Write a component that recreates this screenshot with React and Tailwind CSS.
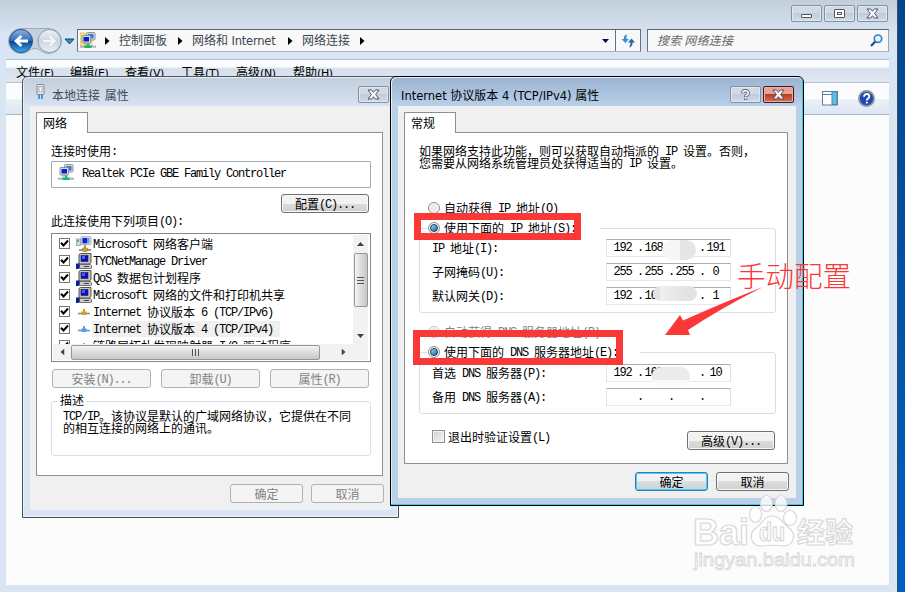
import React from 'react';

const CJK = "font-['Noto_Sans_CJK_SC',sans-serif]";

// Mixed text: half-width runs take six pixels a character, full-width runs twelve.
function T({ children }) {
  return String(children)
    .split(/([\x20-\x7e]+)/)
    .filter(Boolean)
    .map((run, i) =>
      /^[\x20-\x7e]/.test(run) ? (
        <span key={i} className="align-[1px] font-['Liberation_Mono',monospace] text-[12px] leading-[0px] tracking-[-1.2px]">{run}</span>
      ) : (
        <span key={i}>{run}</span>
      )
    );
}

function Line({ children, className = '' }) {
  return <div className={`h-[12px] shrink-0 whitespace-pre text-[12px] leading-[12px] ${CJK} ${className}`}><T>{children}</T></div>;
}

function Button({ children, className = '', disabled, primary }) {
  const tone = disabled
    ? 'border-[#adb2b5] bg-[#f4f4f4] text-[#838383]'
    : primary
      ? 'border-[#2c7fb5] bg-gradient-to-b from-[#f0f2f3] from-50% via-[#dcdfe1] via-50% to-[#cdd2d4] text-black shadow-[inset_0_0_0_1px_#4bcdf5]'
      : 'border-[#707070] bg-gradient-to-b from-[#f2f2f2] from-50% via-[#dddddd] via-50% to-[#cfcfcf] text-black shadow-[inset_0_0_0_1px_#f8f8f8]';
  return (
    <button className={`flex shrink-0 items-center justify-center rounded-[3px] border ${tone} ${className}`}>
      <Line>{children}</Line>
    </button>
  );
}

function CloseGlyph() {
  return (
    <svg width="13" height="11" viewBox="0 0 13 11">
      <path d="M1 1h3.6l1.9 2.3L8.4 1H12L8.6 5.5 12 10H8.4L6.5 7.7 4.6 10H1l3.4-4.5z" fill="#fff" stroke="#4a515c" strokeWidth="1" />
    </svg>
  );
}

function CaptionButton({ children, red }) {
  const tone = red
    ? 'border-[#4a1420] bg-gradient-to-b from-[#e3a495] from-50% via-[#b93c1e] via-50% to-[#d2705a] shadow-[inset_0_0_0_1px_#e8b0a4]'
    : 'border-[#8390a3] bg-gradient-to-b from-[#d0dae7] from-50% via-[#c0ccdb] via-50% to-[#d0dcea] shadow-[inset_0_0_0_1px_#dfe7f1]';
  return <div className={`flex h-[17px] w-[31px] items-center justify-center rounded-[2px] border ${tone}`}>{children}</div>;
}

function ConnectionIcon({ folder }) {
  return (
    <svg width="16" height="17" viewBox="0 0 16 17" className="shrink-0">
      {folder && <path d="M0 1h5l1 1h6v12H0z" fill="#fbe28a" stroke="#d9b54c" strokeWidth=".7" />}
      <rect x="6.5" y=".5" width="8.5" height="7.5" rx="1" fill="#d9dde0" stroke="#8d9499" />
      <rect x="8" y="2" width="5.5" height="4.5" fill="#3e76e0" />
      <rect x="2" y="3.5" width="8.5" height="7.5" rx="1" fill="#d9dde0" stroke="#8d9499" />
      <rect x="3.5" y="5" width="5.5" height="4.5" fill="#0a1fc8" />
      <rect x="4" y="11" width="6" height="1.4" fill="#9aa0a4" />
      <path d="M0 14.7h16" stroke="#a9b3b9" strokeWidth="2" />
      <path d="M7 12h2v1.5h2.5V16h-7v-2.500H7z" fill="#17b86a" />
    </svg>
  );
}

function ClientIcon() {
  return (
    <svg width="16" height="16" viewBox="0 0 16 16">
      <rect x=".5" y="3" width="4" height="6.500" fill="#d6dadc" stroke="#8a9094" strokeWidth=".7" />
      <rect x="1" y="4" width="2" height="2" fill="#4ec04e" />
      <rect x="5" y=".7" width="10" height="8" rx=".8" fill="#dfe3e6" stroke="#9aa1a6" strokeWidth=".8" />
      <path d="M6.500 2h7v5.300h-7z" fill="#6c98ea" /><path d="M6.500 2h4.500v5.300H6.500z" fill="#0a23d4" />
      <path d="M9 9v3M3 14h12" stroke="#777" strokeWidth="1.400" />
      <rect x="6.500" y="12" width="5" height="3.500" rx="1" fill="#e3a322" stroke="#9b6a0c" strokeWidth=".6" />
    </svg>
  );
}

function ServiceIcon() {
  return (
    <svg width="16" height="16" viewBox="0 0 16 16">
      <path d="M3 1.500 4.500.5H15v9l-2 1.500H3z" fill="#c4c4c4" stroke="#444" strokeWidth=".9" />
      <rect x="5" y="2.500" width="7" height="6" fill="#0b0bd8" stroke="#222" strokeWidth=".6" />
      <path d="M6 3h3v3H6z" fill="#3d62ff" />
      <path d="M3.500 11.500h11l1 1v2.500l-1 .5h-11z" fill="#cacaca" stroke="#555" strokeWidth=".8" />
      <path d="M8 13.500h5" stroke="#444" />
      <path d="M0 10.500h3.500v4.500L2 16H0z" fill="#0a1e9c" />
    </svg>
  );
}

function ProtocolIcon({ blue }) {
  return (
    <svg width="16" height="16" viewBox="0 0 16 16">
      <path d="M2 9.500h12" stroke={blue ? '#6d9cc4' : '#8d8d8d'} strokeWidth="1.600" />
      <path d="M7 5h2v2.500h1.500V11h-5V7.500H7z" fill={blue ? '#5aa0d8' : '#d79a26'} />
    </svg>
  );
}

function Check() {
  return (
    <span className="flex h-[11px] w-[11px] shrink-0 items-center justify-center border border-[#777] bg-white">
      <svg width="9" height="9" viewBox="0 0 9 9"><path d="M1 3.800 3.500 6.500 8 1.500" fill="none" stroke="#000" strokeWidth="2" /></svg>
    </span>
  );
}

function Triangle({ className = '' }) {
  return <svg width="7" height="4" viewBox="0 0 7 4" className={className}><path d="M0 0h7L3.500 4z" fill="currentColor" /></svg>;
}

function Crumb() {
  return <svg width="5" height="8" viewBox="0 0 5 8" className="shrink-0"><path d="M0 0v8l4.500-4z" fill="#000" /></svg>;
}

function Explorer() {
  return (
    <div className="flex h-[592px] w-[898px] flex-col border-r border-[#3d4f63] bg-[#d9e5f3]">
      <div className="flex h-[59px] flex-col bg-gradient-to-b from-[#c3cedb] to-[#d9e5f3] to-60%">
        <div className="flex h-[29px] justify-end gap-[2px] pt-[5px] pr-[9px]">
          <CaptionButton><span className="mt-1 h-[4px] w-[11px] rounded-[1px] border border-[#555] bg-white" /></CaptionButton>
          <CaptionButton>
            <span className="flex h-[9px] w-[11px] items-center justify-center rounded-[1px] border border-[#555] bg-white"><span className="h-[3px] w-[5px] border border-[#555]" /></span>
          </CaptionButton>
          <CaptionButton><CloseGlyph /></CaptionButton>
        </div>
        <div className="flex h-[23px]">
          <svg width="77" height="27" viewBox="0 0 77 27" className="-mt-[1px] shrink-0">
            <defs>
              <linearGradient id="back" x1="0" y1="0" x2="0" y2="1"><stop offset="0" stopColor="#8db3df" /><stop offset=".48" stopColor="#2f6dbb" /><stop offset=".5" stopColor="#0c3e93" /><stop offset="1" stopColor="#37b4ee" /></linearGradient>
              <linearGradient id="fwd" x1="0" y1="0" x2="0" y2="1"><stop offset="0" stopColor="#eef2f6" /><stop offset=".5" stopColor="#cbd5df" /><stop offset="1" stopColor="#eaf0f6" /></linearGradient>
            </defs>
            <path d="M21 .5h28a12.500 12.500 0 010 25c-7 0-9-5-14-5s-7 5-14 5A12.500 12.500 0 0121 .5z" fill="#c5d0dd" stroke="#9dabbb" />
            <circle cx="21" cy="13" r="11.500" fill="url(#back)" stroke="#264f85" />
            <circle cx="49.500" cy="13" r="11.500" fill="url(#fwd)" stroke="#8c9cac" />
            <path d="M14 13l6.500-6 1.800 2-2.600 2.600H28v2.800h-8.300l2.600 2.600-1.800 2z" fill="#fff" />
            <path d="M56.500 13L50 7l-1.800 2 2.600 2.600h-8.300v2.800h8.300L48.200 17l1.800 2z" fill="#f4f6f8" stroke="#c3ccd5" strokeWidth=".5" />
            <path d="M65 11h9l-4.500 5z" fill="#2d8fc9" stroke="#1b4670" />
          </svg>
          <div className={`flex h-[23px] w-[564px] items-center border border-t-[#59616b] border-r-[#69717b] border-b-[#a9b3bf] border-l-[#69717b] bg-[#f8f8f8] pl-[2px] text-[12px] leading-[14px] whitespace-pre text-[#3c4650] ${CJK}`}>
            <ConnectionIcon folder />
            <span className="w-[9px]" /><Crumb /><span className="w-[9px]" />
            <span className="-mt-[2px] w-[49px]">控制面板</span>
            <span className="w-[10px]" /><Crumb /><span className="w-[9px]" />
            <span className="-mt-[2px] w-[86px]">网络和<span className="font-['DejaVu_Sans',sans-serif] text-[11.5px] leading-[0px] tracking-[-0.2px]"> Internet</span></span>
            <span className="w-[10px]" /><Crumb /><span className="w-[9px]" />
            <span className="-mt-[2px] w-[49px]">网络连接</span>
            <span className="w-[9px]" /><Crumb />
            <Triangle className="mr-[6px] ml-auto text-[#000a58]" />
            <span className="flex h-full w-[25px] items-center justify-center border-l border-[#69717b]">
              <svg width="15" height="14" viewBox="0 0 15 14">
                <path d="M6 .5C3 1 3 3 3 5H.5l3.800 4L8 5H5.500c0-2 0-3 .5-4.500z" fill="#2f93d4" />
                <path d="M8 13.500c3-.5 3.500-2.500 3.500-5H14l-3.500-4L7 8.500h2.500c0 2-.5 3.500-1.500 5z" fill="#2563b2" />
              </svg>
            </span>
          </div>
          <div className="ml-[6px] flex h-[23px] w-[242px] items-center justify-between border border-t-[#59616b] border-r-[#9aa4b0] border-b-[#a9b3bf] border-l-[#69717b] bg-[#f8f8f8] pr-[5px] pl-[9px]">
            <span className={`-mt-px text-[12px] leading-[14px] tracking-[0.2px] text-[#6a6a6a] italic ${CJK}`}>搜索 网络连接</span>
            <svg width="13" height="13" viewBox="0 0 13 13"><circle cx="8" cy="4.700" r="3.700" fill="#e7f4fd" stroke="#2d7fc8" strokeWidth="1.700" /><path d="M5.300 7.500L1 12" stroke="#1d4f96" strokeWidth="2.200" /></svg>
          </div>
        </div>
      </div>
      <div className={`mr-[8px] ml-[6px] flex h-[23px] border-t border-[#b1bfce] bg-gradient-to-b from-[#fbfcfe] from-30% via-[#d5dfed] via-40% to-[#e1e8f2] pl-[10px] text-[12px] leading-[23px] text-black ${CJK}`}>
        {[['文件(F)', 'w-[54px]'], ['编辑(E)', 'w-[55px]'], ['查看(V)', 'w-[56px]'], ['工具(T)', 'w-[55px]'], ['高级(N)', 'w-[57px]'], ['帮助(H)', 'w-[55px]']].map(([t, w]) => (
          <span key={t} className={w}>{t.slice(0, 2)}<span className="font-['DejaVu_Sans',sans-serif] text-[11px] leading-[0px] tracking-[-0.4px]">{t.slice(2)}</span></span>
        ))}
      </div>
      <div className="mr-[8px] ml-[6px] flex h-[33px] items-center justify-end border-t border-b border-t-[#b3c2d2] border-b-[#a3b6ca] bg-gradient-to-b from-[#fafcfe] from-50% via-[#e9f0f8] via-55% to-[#dce7f3] pr-[14px]">
        <svg width="16" height="15" viewBox="0 0 16 15"><rect x=".5" y=".5" width="15" height="13.500" fill="#fff" stroke="#5c7fa0" /><path d="M1 3.500h9" stroke="#5c7fa0" /><rect x="10" y="1" width="5" height="12.500" fill="#5fc0e4" stroke="#4a87a8" /></svg>
        <svg width="17" height="17" viewBox="0 0 17 17" className="ml-[20px]">
          <circle cx="8.500" cy="8.500" r="7.500" fill="#1f49b0" stroke="#8d9199" strokeWidth="1.800" />
          <path d="M6 6.700c0-3.700 5.300-3.300 5.300-.3 0 2-2.500 2-2.500 4M8.800 11.700v1.800" fill="none" stroke="#fff" strokeWidth="1.900" />
        </svg>
      </div>
      <div className="mr-[8px] mb-[7px] ml-[6px] flex-1 bg-[#fcfcfc]" />
    </div>
  );
}

const items = [
  ['Microsoft 网络客户端', ClientIcon],
  ['TYCNetManage Driver', ServiceIcon],
  ['QoS 数据包计划程序', ServiceIcon],
  ['Microsoft 网络的文件和打印机共享', ServiceIcon],
  ['Internet 协议版本 6 (TCP/IPv6)', ProtocolIcon],
  ['Internet 协议版本 4 (TCP/IPv4)', ProtocolIcon, true],
  ['链路层拓扑发现映射器 I/O 驱动程序', ProtocolIcon],
];

function Tab({ children }) {
  return (
    <div className="relative z-10 ml-[6px] flex h-[21px] w-[52px] shrink-0 items-center border border-b-0 border-[#8c8e94] bg-white pl-[6px]">
      <Line className="text-black">{children}</Line>
    </div>
  );
}

function ConnectionDialog() {
  return (
    <div className="absolute top-[76px] left-[22px] flex h-[442px] w-[377px] flex-col rounded-t-[6px] border border-[#4b4f55] bg-[#d9e5f3] px-[7px] pb-[7px] shadow-[inset_0_0_0_1px_#eaf1f9]">
      <div className="-mx-[6px] mt-[1px] flex h-[28px] shrink-0 items-center rounded-t-[5px] bg-gradient-to-b from-[#c3cfdd] to-[#d7e3f1] pr-[8px] pl-[12px]">
        <svg width="9" height="16" viewBox="0 0 9 16"><rect x="1" y=".5" width="7" height="10" rx="1" fill="#f0f2f4" stroke="#7a838c" /><rect x="3" y="2.500" width="3" height="5.500" fill="#fff" stroke="#8d959c" strokeWidth=".8" /><path d="M3 11v4M6 11v4" stroke="#1c94cc" strokeWidth="1.600" /></svg>
        <div className={`mt-[5px] ml-[7px] text-[12px] leading-[12px] whitespace-pre text-[#3f4a55] ${CJK}`}>本地连接<span className="tracking-[2px]"> </span>属性</div>
        <div className="mt-[5px] ml-auto"><CaptionButton><CloseGlyph /></CaptionButton></div>
      </div>
      <div className="flex flex-1 flex-col bg-[#f0f0f0] pt-[6px] text-black">
        <Tab>网络</Tab>
        <div className="-mt-[1px] ml-[6px] flex h-[344px] w-[347px] shrink-0 flex-col border border-[#8c8e94] bg-white pt-[12px] pl-[14px]">
          <Line>连接时使用:</Line>
          <div className="mt-[4px] flex h-[27px] w-[320px] shrink-0 items-center rounded-[1px] border border-[#a5a9ae] pb-[4px] pl-[6px]">
            <ConnectionIcon />
            <Line className="ml-[8px]">Realtek PCIe GBE Family Controller</Line>
          </div>
          <Button className="mt-[6px] ml-[230px] h-[19px] w-[88px]">配置(C)...</Button>
          <Line className="mt-[2px]">此连接使用下列项目(O):</Line>
          <div className="mt-[6px] flex h-[129px] w-[320px] shrink-0 flex-col border border-[#828790] p-[1px]">
            <div className="flex h-[109px] shrink-0">
              <div className="h-[109px] w-[300px] overflow-hidden">
                {items.map(([name, Icon, selected]) => (
                  <div key={name} className="flex h-[17px] items-center pl-[6px]">
                    <Check />
                    <span className="ml-[6px] shrink-0"><Icon blue={selected} /></span>
                    <div className={`flex h-[16px] items-center pr-[7px] pl-px ${selected ? 'bg-[#f0f0f0]' : ''}`}><Line>{name}</Line></div>
                  </div>
                ))}
              </div>
              <div className="flex h-[109px] w-[15px] flex-col items-center bg-[#f2f2f2] text-[#404040]">
                <span className="flex h-[18px] items-center"><Triangle className="rotate-180" /></span>
                <span className="flex h-[54px] w-[14px] flex-col items-center justify-center gap-[2px] rounded-[2px] border border-[#979797] bg-gradient-to-r from-[#f4f4f4] to-[#c6c6c6]">
                  <i className="h-px w-[7px] bg-[#555]" /><i className="h-px w-[7px] bg-[#555]" /><i className="h-px w-[7px] bg-[#555]" />
                </span>
                <span className="mt-auto flex h-[17px] items-center"><Triangle /></span>
              </div>
            </div>
            <div className="flex h-[16px] w-[315px] items-center bg-[#f2f2f2] text-[#404040]">
              <span className="flex w-[18px] justify-center"><Triangle className="rotate-90" /></span>
              <span className="flex h-[15px] w-[249px] items-center justify-center gap-[2px] rounded-[2px] border border-[#979797] bg-gradient-to-b from-[#f4f4f4] to-[#c6c6c6]">
                <i className="h-[7px] w-px bg-[#555]" /><i className="h-[7px] w-px bg-[#555]" /><i className="h-[7px] w-px bg-[#555]" />
              </span>
              <span className="ml-auto flex w-[28px]"><Triangle className="-rotate-90" /></span>
            </div>
          </div>
          <div className="mt-[7px] ml-px flex gap-[10px]">
            <Button disabled className="h-[19px] w-[99px]">安装(N)...</Button>
            <Button disabled className="h-[19px] w-[99px]">卸载(U)</Button>
            <Button disabled className="h-[19px] w-[99px]">属性(R)</Button>
          </div>
          <div className="mt-[13px] flex h-[55px] w-[320px] shrink-0 flex-col rounded-[3px] border border-[#d5dfe5] pl-[6px]">
            <Line className="-mt-[8px] w-[28px] bg-white pl-[2px]">描述</Line>
            <Line className="mt-[4px] pl-[5px]">TCP/IP。该协议是默认的广域网络协议，它提供在不同</Line>
            <Line className="pl-[5px]">的相互连接的网络上的通讯。</Line>
          </div>
        </div>
        <div className="mt-[8px] ml-[200px] flex gap-[8px]">
          <Button disabled className="h-[19px] w-[73px]">确定</Button>
          <Button disabled className="h-[19px] w-[73px]">取消</Button>
        </div>
      </div>
    </div>
  );
}

function Radio({ checked, disabled }) {
  return (
    <span className={`flex h-[12px] w-[12px] shrink-0 items-center justify-center rounded-full border ${disabled ? 'border-[#c5c5c5]' : 'border-[#8e8f8f]'} bg-[#ececec] shadow-[inset_0_0_0_1px_#fafafa]`}>
      {checked && <span className="h-[8px] w-[8px] rounded-full border border-[#173a5c] bg-gradient-to-br from-[#9fe0f8] to-[#14619c]" />}
    </span>
  );
}

function RadioLine({ children, checked, disabled, className = '' }) {
  return (
    <div className={`flex h-[18px] shrink-0 items-center bg-white ${disabled ? 'text-[#838383]' : ''} ${className}`}>
      <Radio checked={checked} disabled={disabled} />
      <Line className="ml-[4px]">{children}</Line>
    </div>
  );
}

function Address({ label, parts, className = '' }) {
  return (
    <div className={`flex h-[18px] shrink-0 items-center pl-[12px] ${className}`}>
      <Line className="w-[174px]">{label}</Line>
      <div className="flex h-[18px] w-[125px] items-center border border-t-[#abadb3] border-r-[#dbdfe6] border-b-[#e3e9ef] border-l-[#e2e3ea] bg-white pl-[3px] font-['Liberation_Mono',monospace] text-[12px] leading-[12px] tracking-[-1.2px]">
        {parts.map((p, i) => (
          <React.Fragment key={i}>
            {i > 0 && <span className="w-[6px] translate-x-[2px] text-center">.</span>}
            <span className="w-[25px] text-center">{p}</span>
          </React.Fragment>
        ))}
      </div>
    </div>
  );
}

function AddressDialog() {
  return (
    <div className="absolute top-[76px] left-[390px] flex h-[430px] w-[414px] flex-col rounded-t-[6px] border border-black bg-[#bad0e9] px-[7px] pb-[7px] shadow-[inset_-1px_-1px_0_0_#2fd0ea,inset_1px_1px_0_0_#e4eefa]">
      <div className="-mx-[6px] mt-[1px] flex h-[28px] shrink-0 items-center rounded-t-[5px] bg-gradient-to-b from-[#9cb4d1] to-[#b9d0ea] pr-[8px] pl-[9px] text-black">
        <div className={`mt-[5px] text-[12px] leading-[12px] whitespace-pre ${CJK}`}>
          <span className="font-['DejaVu_Sans',sans-serif] text-[11.5px] leading-[0px]">Internet </span>协议版本<span className="font-['DejaVu_Sans',sans-serif] text-[11.5px] leading-[0px]"> 4 (TCP/IPv4) </span>属性
        </div>
        <div className="mt-[5px] ml-auto flex gap-[2px]">
          <CaptionButton>
            <svg width="9" height="12" viewBox="0 0 9 12"><path d="M1.700 4.200C1.700.800 7.300.800 7.300 4c0 2-2.700 1.800-2.700 4M4.600 9v2" fill="none" stroke="#4a515c" strokeWidth="3.200" /><path d="M1.700 3.800C1.700 1 7.300 1 7.300 4c0 2-2.700 1.800-2.700 3.600M4.600 9v1.600" fill="none" stroke="#fff" strokeWidth="1.700" /></svg>
          </CaptionButton>
          <CaptionButton red><CloseGlyph /></CaptionButton>
        </div>
      </div>
      <div className="flex flex-1 flex-col bg-[#f0f0f0] pt-[6px] text-black">
        <Tab>常规</Tab>
        <div className="-mt-[1px] ml-[6px] flex h-[332px] w-[384px] shrink-0 flex-col border border-[#8c8e94] bg-white pt-[12px] pl-[14px]">
          <Line>如果网络支持此功能，则可以获取自动指派的 IP 设置。否则，</Line>
          <Line>您需要从网络系统管理员处获得适当的 IP 设置。</Line>
          <RadioLine className="mt-[30px] ml-[9px]">自动获得 IP 地址(O)</RadioLine>
          <div className="mt-[11px] flex h-[85px] w-[357px] shrink-0 flex-col rounded-[3px] border border-[#d5dfe5]">
            <RadioLine checked className="-mt-[10px] ml-[7px] w-[173px] pl-px">使用下面的 IP 地址(S):</RadioLine>
            <Address className="mt-[2px]" label="IP 地址(I):" parts={['192', '168', '', '191']} />
            <Address className="mt-[6px]" label="子网掩码(U):" parts={['255', '255', '255', '0']} />
            <Address className="mt-[6px]" label="默认网关(D):" parts={['192', '168', '', '1']} />
          </div>
          <RadioLine disabled className="mt-[10px] ml-[9px]">自动获得 DNS 服务器地址(B)</RadioLine>
          <div className="mt-[11px] flex h-[62px] w-[357px] shrink-0 flex-col rounded-[3px] border border-[#d5dfe5]">
            <RadioLine checked className="-mt-[10px] ml-[7px] w-[213px] pl-px">使用下面的 DNS 服务器地址(E):</RadioLine>
            <Address className="mt-[3px]" label="首选 DNS 服务器(P):" parts={['192', '168', '', '10']} />
            <Address className="mt-[6px]" label="备用 DNS 服务器(A):" parts={['', '', '', '']} />
          </div>
          <div className="mt-[17px] flex items-start pl-[13px]">
            <span className="-mt-px h-[13px] w-[13px] border border-[#8e8f8f] bg-gradient-to-br from-[#cfd3d7] to-[#f6f6f6] shadow-[inset_0_0_0_1px_#f4f4f4]" />
            <Line className="ml-[3px]">退出时验证设置(L)</Line>
            <Button className="mr-[12px] ml-auto h-[19px] w-[88px]">高级(V)...</Button>
          </div>
        </div>
        <div className="mt-[8px] ml-[237px] flex gap-[8px]">
          <Button primary className="h-[19px] w-[73px]">确定</Button>
          <Button className="h-[19px] w-[73px]">取消</Button>
        </div>
      </div>
    </div>
  );
}

function Annotations() {
  return (
    <>
      <div className="absolute top-[240px] left-[662px] h-[20px] w-[34px] rounded-[10px] bg-gradient-to-r from-[#f6f6f6] from-53% to-[#e6e6e6] to-53%" />
      <div className="absolute top-[286px] left-[653px] h-[15px] w-[44px] rounded-[8px] bg-gradient-to-r from-[#e2e4e4] from-15% via-[#eff0f0] via-15% to-[#e2e4e4] to-75%" />
      <div className="absolute top-[367px] left-[652px] h-[20px] w-[38px] rounded-[9px] bg-gradient-to-b from-[#ebebeb] from-65% to-[#fafafa] to-65%" />
      <div className="absolute top-[213px] left-[414px] h-[27px] w-[167px] border-[7px] border-[#fb3838]" />
      <div className="absolute top-[330px] left-[413px] h-[35px] w-[210px] border-[7px] border-[#fb3838]" />
      <svg className="absolute top-[280px] left-[660px]" width="110" height="60" viewBox="660 280 110 60">
        <path d="M665 335L680 315l3 5.500q45-20 80-33.500-40 20-75 43l2 5z" fill="#fb3838" />
      </svg>
      <div className={`absolute top-[259px] left-[737px] text-[28.500px] leading-[32px] font-light whitespace-nowrap text-[#fb3838] ${CJK}`}>手动配置</div>
    </>
  );
}

function Watermark() {
  return (
    <svg className="absolute top-[490px] left-[686px]" width="180" height="90" viewBox="686 490 180 90">
      <g fill="#fff" fillOpacity=".8" stroke="#d8d8d8" strokeWidth="1.200" fontFamily="Liberation Sans, Noto Sans CJK SC, sans-serif">
        <text x="693" y="545" fontSize="37" fontWeight="bold" textLength="56" lengthAdjust="spacingAndGlyphs">Bai</text>
        <ellipse cx="755.500" cy="514.500" rx="6" ry="8" />
        <ellipse cx="766.500" cy="503.500" rx="6" ry="8" />
        <ellipse cx="781" cy="503.500" rx="6" ry="8" />
        <ellipse cx="790" cy="518" rx="6.500" ry="7.500" />
        <path d="M772 516c8 0 11 7 17 12 9 7 3 19-6 18-5-1-16-1-21 0-10 1-15-11-6-18 7-5 8-12 16-12z" />
        <text x="759" y="541" fontSize="25" fontWeight="bold" textLength="26" lengthAdjust="spacingAndGlyphs">du</text>
        <text x="797" y="543" fontSize="28" fontWeight="bold" textLength="56">经验</text>
        <text x="694" y="566" fontSize="19" strokeWidth=".9" textLength="161" lengthAdjust="spacingAndGlyphs">jingyan.baidu.com</text>
      </g>
    </svg>
  );
}

export default function App() {
  return (
    <div className="relative h-[592px] w-[905px] overflow-hidden bg-gradient-to-b from-[#03458c] to-[#0060c2]">
      <Explorer />
      <ConnectionDialog />
      <AddressDialog />
      <Annotations />
      <Watermark />
    </div>
  );
}
